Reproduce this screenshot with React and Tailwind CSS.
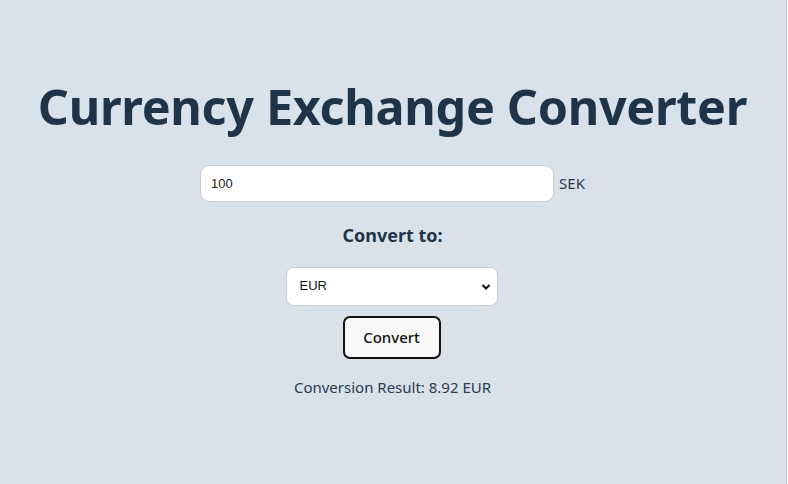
import React from "react";

export default function App() {
  return (
    <div className="min-h-[484px] w-[787px] bg-[#d9e2eb] border-r border-[#c4cad1] font-['Noto_Sans','Open_Sans',sans-serif] text-[#1f3447]">
      <div className="flex flex-col items-center pt-[70px] pr-[1px]">
        <h1 className="text-[48.5px] font-bold leading-[72px] tracking-[-0.3px] text-[#1f3449]">
          Currency Exchange Converter
        </h1>
        <div className="mt-[23px] flex items-center">
          <input
            readOnly
            value="100"
            className="h-[37px] w-[354px] rounded-[9px] border border-[#c6ccd2] bg-white px-[10px] text-[13px] text-[#222] font-['Liberation_Sans',sans-serif] outline-none"
          />
          <span className="ml-[5px] text-[15px] text-[#2a3b4c]">SEK</span>
        </div>
        <div className="mt-[20px] text-[18px] font-bold leading-[26px] text-[#1f3449]">Convert to:</div>
        <div className="relative mt-[19px] mr-[2px] h-[39px] w-[212px] rounded-[8px] border border-[#c6ccd2] bg-white">
          <span className="absolute left-[13px] top-[10px] text-[13px] leading-[16px] text-[#111] font-['Liberation_Sans',sans-serif]">EUR</span>
          <svg className="absolute right-[6px] top-[15px]" width="10" height="8" viewBox="0 0 10 8">
            <path d="M1.5 2 L5 5.5 L8.5 2" fill="none" stroke="#111" strokeWidth="2" />
          </svg>
        </div>
        <button className="mt-[10px] mr-[2px] h-[43px] w-[98px] rounded-[7px] border-2 border-[#111] bg-[#f8f8f8] text-[15px] font-medium text-[#111]">
          Convert
        </button>
        <div className="mt-[17px] text-[15px] leading-[22px] text-[#2a3b4c]">Conversion Result: 8.92 EUR</div>
      </div>
    </div>
  );
}
